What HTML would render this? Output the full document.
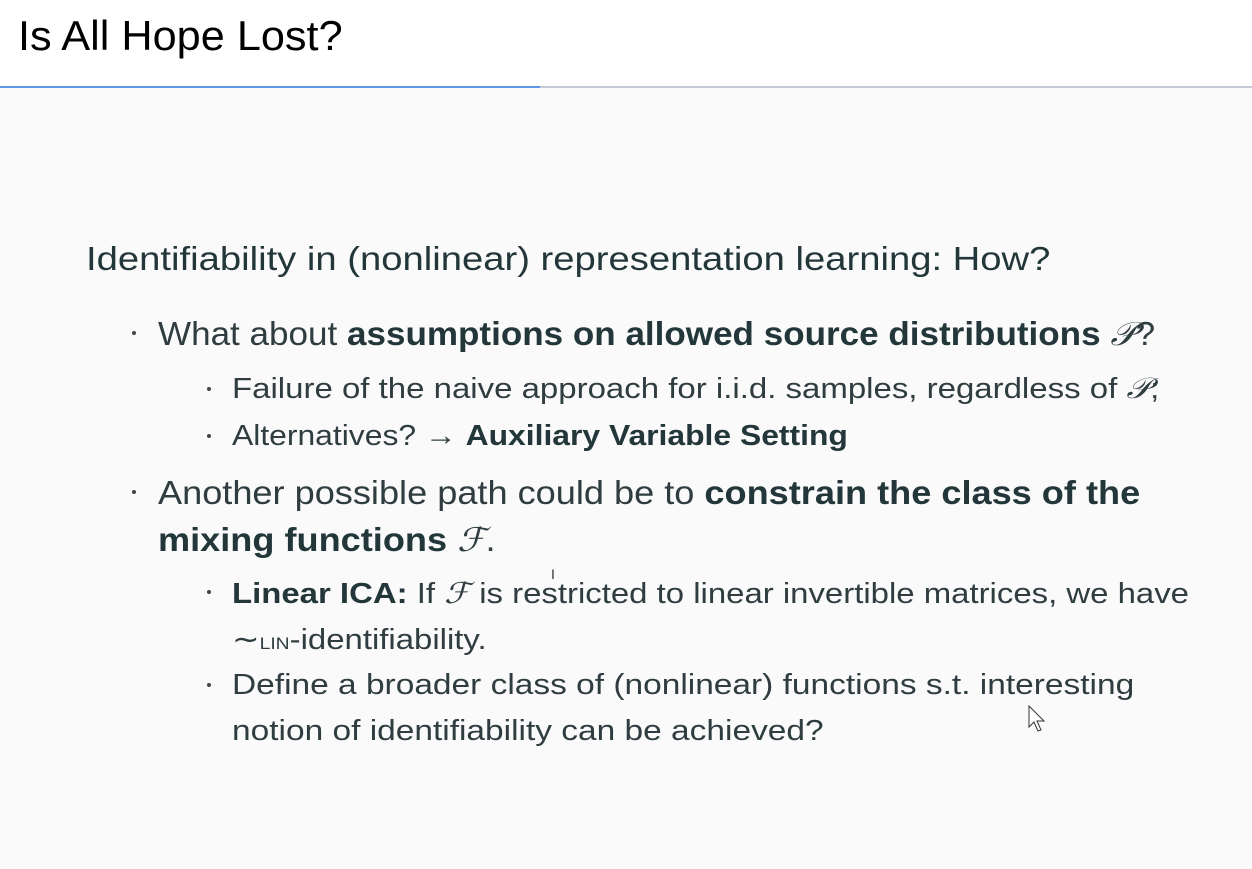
<!DOCTYPE html>
<html><head><meta charset="utf-8"><style>
body{margin:0;width:1252px;height:869px;background:#fafafa;overflow:hidden;position:relative;font-family:"Liberation Sans",sans-serif;color:#23373b}
.hdr{position:absolute;left:0;top:0;width:1252px;height:86px;background:#fff}
.t{position:absolute;left:18px;top:12px;font-size:42px;color:#000;transform:scaleX(1.03);transform-origin:left top;white-space:nowrap}
.l1{position:absolute;left:0;top:86px;width:540px;height:2px;background:#5b97e5}
.l2{position:absolute;left:540px;top:86px;width:712px;height:2px;background:#c4c9d4}
.ln{position:absolute;white-space:nowrap;transform-origin:left center;color:#2f3d40}
b{font-weight:bold;color:#23373b}
.m{font-family:"Liberation Serif",serif;font-style:italic}
.dot{position:absolute;width:4px;height:4px;border-radius:2px;background:#444}
</style></head><body>
<div class="hdr"></div>
<div class="t">Is All Hope Lost?</div>
<div class="l1"></div><div class="l2"></div>

<div class="ln" style="left:86px;top:240px;font-size:33px;color:#23373b;transform:scaleX(1.158)">Identifiability in (nonlinear) representation learning: How?</div>

<div class="dot" style="left:132px;top:331px"></div>
<div class="ln" style="left:158px;top:315px;font-size:33px;transform:scaleX(1.062)">What about <b>assumptions on allowed source distributions</b> <span class="m">𝒫</span>?</div>

<div class="dot" style="left:207px;top:387px"></div>
<div class="ln" style="left:232px;top:373px;font-size:29px;transform:scaleX(1.137)">Failure of the naive approach for i.i.d. samples, regardless of <span class="m">𝒫</span>;</div>
<div class="dot" style="left:207px;top:434px"></div>
<div class="ln" style="left:232px;top:420px;font-size:29px;transform:scaleX(1.098)">Alternatives? → <b>Auxiliary Variable Setting</b></div>

<div class="dot" style="left:132px;top:490px"></div>
<div class="ln" style="left:158px;top:474px;font-size:33px;transform:scaleX(1.095)">Another possible path could be to <b>constrain the class of the</b></div>
<div class="ln" style="left:158px;top:520px;font-size:33px;transform:scaleX(1.095)"><b>mixing functions</b> <span class="m">ℱ</span>.</div>

<div class="dot" style="left:207px;top:590px"></div>
<div class="ln" style="left:232px;top:576px;font-size:29px;transform:scaleX(1.135)"><b>Linear ICA:</b> If <span class="m">ℱ</span> is restricted to linear invertible matrices, we have</div>
<div class="ln" style="left:232px;top:622px;font-size:29px;transform:scaleX(1.135)">∼<span style="font-size:17px">LIN</span>-identifiability.</div>

<div class="dot" style="left:207px;top:683px"></div>
<div class="ln" style="left:232px;top:669px;font-size:29px;transform:scaleX(1.154)">Define a broader class of (nonlinear) functions s.t. interesting</div>
<div class="ln" style="left:232px;top:715px;font-size:29px;transform:scaleX(1.154)">notion of identifiability can be achieved?</div>

<svg style="position:absolute;left:1028px;top:705px" width="20" height="30" viewBox="0 0 20 30"><path d="M1 1 L1 22 L6 17 L10 26 L13 25 L9 16 L16 16 Z" fill="#fff" stroke="#333" stroke-width="1"/></svg>
<div style="position:absolute;left:551px;top:566px;font-size:14px;color:#333">I</div>
</body></html>
